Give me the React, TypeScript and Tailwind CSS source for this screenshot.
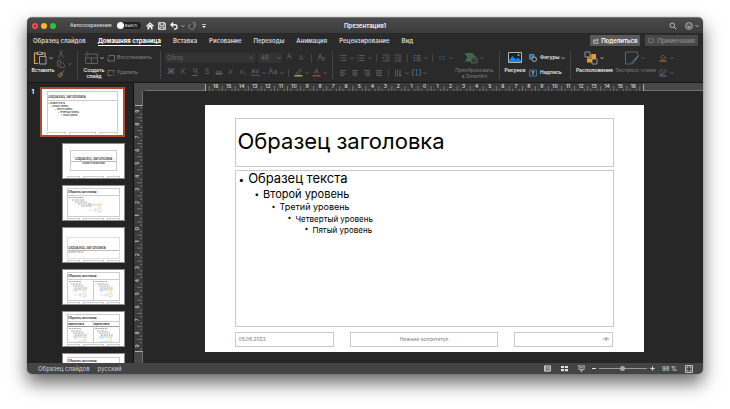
import type { ReactNode } from 'react';
import clsx from 'clsx';

interface IconProps {
  className?: string;
  box?: string;
  children: ReactNode;
}

function Icon({ className = 'size-2', box = '0 0 16 16', children }: IconProps) {
  return (
    <svg viewBox={box} className={clsx('shrink-0', className)} fill="none" stroke="currentColor" strokeWidth="1.6" aria-hidden="true">
      {children}
    </svg>
  );
}

function Chevron({ className = 'text-[#707070]' }: { className?: string }) {
  return (
    <span className={clsx('flex w-1.5 shrink-0 justify-center', className)}>
      <Icon className="size-1" box="0 0 8 8">
        <path d="M1 2.5l3 3 3-3" />
      </Icon>
    </span>
  );
}

/* ---------- Title bar ---------- */

function TitleBar() {
  return (
    <header className="grid h-4 shrink-0 grid-cols-[1fr_auto_1fr] items-center border-t border-[#777] bg-linear-to-b from-[#4b4b4b] to-[#3b3b3b] text-[#e6e6e6]">
      <div className="flex items-center pl-[5px]">
        <div className="flex gap-[3px]">
          <button aria-label="Закрыть" className="flex size-[6px] items-center justify-center rounded-full bg-[#fb4f49]">
            <span className="size-[2px] rounded-full bg-[#7c1512]" />
          </button>
          <button aria-label="Свернуть" className="size-[6px] rounded-full bg-[#fcb827]" />
          <button aria-label="Развернуть" className="size-[6px] rounded-full bg-[#2bc33b]" />
        </div>
        <label className="ml-[14px] flex items-center gap-[5px] text-[5px] font-semibold text-[#d0d0d0]">
          Автосохранение
          <input type="checkbox" className="sr-only" />
          <span className="flex h-[7px] w-6 items-center gap-px rounded-full bg-[#202020] text-[4px] text-[#bdbdbd]">
            <span className="size-[7px] rounded-full bg-white" />
            ВЫКЛ.
          </span>
        </label>
        <div className="flex items-center pl-[3px] text-[#f2f2f2]">
          <button aria-label="Главная" className="flex w-3 justify-center">
            <Icon>
              <path d="M1 8.5L8 2l7 6.5" strokeWidth="2.400" />
              <path d="M3 9l5-4.5L13 9v6H9.800v-4H6.200v4H3z" fill="currentColor" stroke="none" />
            </Icon>
          </button>
          <button aria-label="Сохранить" className="flex w-3 justify-center">
            <Icon>
              <path d="M1.500 1.500h11l2 2v11h-13z" strokeWidth="2.200" />
              <path d="M4 2v4.500h8V2M4 14v-4h8v4" strokeWidth="1.800" />
            </Icon>
          </button>
          <button aria-label="Отменить" className="flex w-3 justify-center">
            <Icon>
              <path d="M6.500 1L2 5.500 6.500 10M2 5.500h8a4 4 0 014 4v.5a4 4 0 01-4 4H8" strokeWidth="2.600" />
            </Icon>
          </button>
          <Chevron className="text-[#d0d0d0]" />
          <button aria-label="Повторить" className="flex w-3 justify-center text-[#8b8b8b]">
            <Icon>
              <path d="M4 4a6 6 0 108.500 1M9 1.500h5V7" strokeWidth="2" />
            </Icon>
          </button>
          <button aria-label="Настроить панель" className="flex w-3 justify-center">
            <Icon className="size-[6px]">
              <path d="M3 4h10" strokeWidth="2" />
              <path d="M3 8h10l-5 5z" fill="currentColor" stroke="none" />
            </Icon>
          </button>
        </div>
      </div>
      <h1 className="text-[6px] font-bold">Презентация1</h1>
      <div className="flex items-center justify-end gap-2 pr-[3px] text-[#d0d0d0]">
        <button aria-label="Поиск">
          <Icon>
            <circle cx="6.500" cy="6.500" r="4.500" />
            <path d="M10 10l4.500 4.500" strokeWidth="2" />
          </Icon>
        </button>
        <button aria-label="Отзыв" className="flex items-center gap-px">
          <Icon>
            <circle cx="8" cy="8" r="6.800" />
            <path d="M5 9.500c1 2.500 5 2.500 6 0zM5.500 5v2M10.500 5v2" />
          </Icon>
          <Chevron className="text-[#d0d0d0]" />
        </button>
      </div>
    </header>
  );
}

/* ---------- Tabs ---------- */

const tabs = ['Образец слайдов', 'Домашняя страница', 'Вставка', 'Рисование', 'Переходы', 'Анимация', 'Рецензирование', 'Вид'];

function TabBar() {
  return (
    <nav className="flex h-[15px] shrink-0 items-center bg-[#2a2a2a] pr-[5px] pl-1.5">
      <div className="flex gap-3 text-[6px] leading-[9px] font-semibold text-[#d6d6d6]">
        {tabs.map((tab) => (
          <a
            key={tab}
            href="#"
            className={clsx('whitespace-nowrap border-b', tab === 'Домашняя страница' ? 'border-white font-bold text-white' : 'border-transparent')}
          >
            {tab}
          </a>
        ))}
      </div>
      <div className="ml-auto flex gap-[5px] text-[6px] leading-[11px]">
        <button className="flex h-[11px] items-center gap-[2px] rounded-[1px] bg-[#5a5a5a] px-[3px] font-semibold text-white">
          <Icon className="size-[6px]">
            <path d="M6 5H2v9h11v-4M5 10c0-4 3-5 8-5M10 1.500L14 5l-4 3.500" />
          </Icon>
          Поделиться
        </button>
        <button className="flex h-[11px] items-center gap-[3px] rounded-[1px] bg-[#484848] px-[3px] font-medium text-[#8e8e8e]">
          <Icon className="size-[6px]">
            <path d="M1.500 2h13v9H8l-3 3v-3H1.500z" />
          </Icon>
          Примечания
        </button>
      </div>
    </nav>
  );
}

/* ---------- Ribbon ---------- */

function Separator() {
  return <div className="mx-1 my-[3px] w-px shrink-0 bg-[#444]" />;
}

function Divider() {
  return <span className="mx-[3px] h-2 w-px shrink-0 bg-[#454545]" />;
}

interface BigButtonProps {
  label: string;
  width: string;
  icon: ReactNode;
  menu?: boolean;
  dim?: boolean;
}

function BigButton({ label, width, icon, menu = true, dim = false }: BigButtonProps) {
  return (
    <button className={clsx('flex shrink-0 flex-col items-center gap-[2px] pt-[2px]', width)}>
      <span className="flex h-[15px] items-center gap-px">
        {icon}
        {menu && <Chevron className={dim ? 'text-[#707070]' : 'text-[#e0e0e0]'} />}
      </span>
      <span className={clsx('text-center text-[5px] leading-[6px] whitespace-pre', dim ? 'font-medium text-[#757575]' : 'font-semibold text-[#ececec]')}>
        {label}
      </span>
    </button>
  );
}

function Tool({ label, children }: { label: string; children: ReactNode }) {
  return (
    <button aria-label={label} className="flex w-3 shrink-0 items-center justify-center text-[#646464]">
      {children}
    </button>
  );
}

function Row({ children }: { children: ReactNode }) {
  return <div className="flex h-[15px] items-center">{children}</div>;
}

function ClipboardGroup() {
  return (
    <>
      <BigButton
        label="Вставить"
        width="w-6"
        icon={
          <Icon className="size-[14px]" box="0 0 28 28">
            <path d="M10 4H3v21h7M17 4h7v6" stroke="#e2a33c" strokeWidth="2.400" />
            <path d="M8 7V3.500h3L13.500 1 16 3.500h3V7z" stroke="#c8c8c8" />
            <path d="M13 11h13v15H13z" stroke="#bdbdbd" fill="#2a2a2a" />
          </Icon>
        }
      />
      <div className="flex w-[18px] shrink-0 flex-col pt-px">
        <div className="flex h-[10px] items-center">
          <Tool label="Вырезать">
            <Icon>
              <path d="M5 1l5 10M11 1L6 11" />
              <circle cx="4" cy="13" r="2" stroke="#34566f" />
              <circle cx="12" cy="13" r="2" stroke="#34566f" />
            </Icon>
          </Tool>
        </div>
        <div className="flex h-[10px] items-center">
          <Tool label="Копировать">
            <Icon>
              <path d="M5 12H1V1h6l2 2M6 5h5l3.500 3.500V15H6z" />
            </Icon>
          </Tool>
          <Chevron />
        </div>
        <div className="flex h-[10px] items-center">
          <Tool label="Формат по образцу">
            <Icon>
              <path d="M14 1l-4 5M7 5l5 4" stroke="#7a7a7a" strokeWidth="2" />
              <path d="M6 6l5 4-4 5-6-4z" stroke="#8f7041" fill="#5b4a2e" />
            </Icon>
          </Tool>
        </div>
      </div>
    </>
  );
}

function SlidesGroup() {
  return (
    <>
      <BigButton
        label={'Создать\nслайд'}
        width="w-6"
        icon={
          <Icon className="size-[14px] text-[#6a6a6a]" box="0 0 28 28">
            <path d="M9 6h18v19H3V12M3 14h24M15 14v11" />
            <path d="M6 1v11M0 6.500h12" stroke="#3c6a4c" strokeWidth="2" />
          </Icon>
        }
      />
      <div className="flex w-[50px] shrink-0 flex-col pt-[2px] pl-px text-[5px] font-medium text-[#7c7c7c]">
        <Row>
          <button className="flex items-center gap-[2px]">
            <Icon>
              <path d="M5 3h10v11H2V8" />
              <path d="M6 6L2 4l2-3" stroke="#33648b" />
            </Icon>
            Восстановить
          </button>
        </Row>
        <Row>
          <button className="flex items-center gap-[2px]">
            <Icon>
              <path d="M9 13H2V3h12v5" />
              <path d="M11 10l4 4M15 10l-4 4" stroke="#833c3c" />
            </Icon>
            Удалить
          </button>
        </Row>
      </div>
    </>
  );
}

function FontGroup() {
  return (
    <div className="flex w-[163px] shrink-0 flex-col pt-[2px] text-[7px] text-[#6c6c6c]">
      <Row>
        <div className="flex h-[10px] w-[90px] items-center rounded-[1px] bg-[#333] pr-px">
          <select aria-label="Шрифт" className="h-[10px] min-w-0 flex-1 appearance-none pl-[2px] text-[6px] leading-[10px]">
            <option>Gilroy</option>
          </select>
          <Chevron />
        </div>
        <div className="ml-[3px] flex h-[10px] w-6 items-center rounded-[1px] bg-[#333]">
          <select aria-label="Размер шрифта" className="h-[10px] min-w-0 flex-1 appearance-none pl-[3px] text-[6px] leading-[10px]">
            <option>48</option>
          </select>
          <Chevron />
        </div>
        <span className="w-[2px]" />
        <Tool label="Увеличить шрифт">A<sup className="text-[4px] text-[#3f627d]">ˆ</sup></Tool>
        <Tool label="Уменьшить шрифт"><span className="text-[6px]">A</span><sup className="text-[4px] text-[#3f627d]">ˇ</sup></Tool>
        <Divider />
        <Tool label="Очистить формат">
          <Icon className="size-[9px]" box="0 0 18 18">
            <path d="M2 13L6.500 2 11 13M4 9h5" />
            <path d="M10 13l4-5 3 2.500-4 5h-2z" stroke="#75507c" />
          </Icon>
        </Tool>
      </Row>
      <Row>
        <Tool label="Полужирный"><b>Ж</b></Tool>
        <Tool label="Курсив"><i>К</i></Tool>
        <Tool label="Подчеркнутый"><u>Ч</u></Tool>
        <Tool label="Тень"><span>S</span></Tool>
        <Tool label="Зачеркнутый"><s className="text-[6px]">ab</s></Tool>
        <Tool label="Надстрочный">x<sup className="text-[4px] text-[#3f627d]">²</sup></Tool>
        <Tool label="Подстрочный">x<sub className="text-[4px] text-[#3f627d]">2</sub></Tool>
        <Tool label="Интервал">
          <Icon className="size-[9px]" box="0 0 18 18">
            <path d="M1 10L4.500 2 8 10M2.500 7.500h4M9 2l3.500 8L16 2" />
            <path d="M2 14.500h14M4 12.500l-2.500 2L4 17M14 12.500l2.500 2L14 17" stroke="#3b6a90" />
          </Icon>
        </Tool>
        <Chevron />
        <Tool label="Регистр">Aa</Tool>
        <Chevron />
        <Divider />
        <Tool label="Цвет выделения">
          <Icon className="size-[9px]" box="0 0 18 18">
            <path d="M6 9l6-7 3 3-6 7H6zM3 12l3-2" />
            <path d="M1 15.500h16" stroke="#a9a54b" strokeWidth="3" />
          </Icon>
        </Tool>
        <Chevron />
        <Tool label="Цвет шрифта">
          <Icon className="size-[9px]" box="0 0 18 18">
            <path d="M5 11l4-9 4 9M6.500 8h5" />
            <path d="M1 15.500h16" stroke="#a64040" strokeWidth="3" />
          </Icon>
        </Tool>
        <Chevron />
      </Row>
    </div>
  );
}

const aligns = [
  { label: 'По левому краю', d: 'M2 3h12M2 6.300h8M2 9.700h12M2 13h8' },
  { label: 'По центру', d: 'M2 3h12M4 6.300h8M2 9.700h12M4 13h8' },
  { label: 'По правому краю', d: 'M2 3h12M6 6.300h8M2 9.700h12M6 13h8' },
  { label: 'По ширине', d: 'M2 3h12M2 6.300h12M2 9.700h12M2 13h12' },
];

function ParagraphGroup() {
  return (
    <div className="flex w-[117px] shrink-0 flex-col pt-[2px]">
      <Row>
        <Tool label="Маркеры">
          <Icon>
            <path d="M5 3h10M5 8h10M5 13h10" />
            <path d="M1 3h2M1 8h2M1 13h2" stroke="#2f5f8e" strokeWidth="2.400" />
          </Icon>
        </Tool>
        <Chevron />
        <Tool label="Нумерация">
          <Icon>
            <path d="M5 3h10M5 8h10M5 13h10" />
            <path d="M2 1v4M2 6v4M2 11v4" stroke="#2f5f8e" />
          </Icon>
        </Tool>
        <Chevron />
        <Divider />
        <Tool label="Уменьшить отступ">
          <Icon>
            <path d="M1 2h14M8 6h7M8 10h7M1 14h14" />
            <path d="M6 8H1M3 6L1 8l2 2" stroke="#2f5f8e" />
          </Icon>
        </Tool>
        <Tool label="Увеличить отступ">
          <Icon>
            <path d="M1 2h14M8 6h7M8 10h7M1 14h14" />
            <path d="M1 8h5M4 6l2 2-2 2" stroke="#2f5f8e" />
          </Icon>
        </Tool>
        <Divider />
        <Tool label="Междустрочный интервал">
          <Icon>
            <path d="M7 3h8M7 6.300h8M7 9.700h8M7 13h8" />
            <path d="M3 2v12M1 4l2-2 2 2M1 12l2 2 2-2" stroke="#2f5f8e" />
          </Icon>
        </Tool>
        <Chevron />
        <Divider />
        <Tool label="Колонки">
          <Icon className="size-[6px]">
            <path d="M0 4h7M0 8h7M0 12h7M9 4h7M9 8h7M9 12h7" stroke="#2f5577" />
          </Icon>
        </Tool>
        <Chevron />
      </Row>
      <Row>
        {aligns.map((align) => (
          <Tool key={align.label} label={align.label}>
            <Icon>
              <path d={align.d} />
            </Icon>
          </Tool>
        ))}
        <Divider />
        <Tool label="Направление текста">
          <Icon>
            <path d="M3 1v14M7 1v14" />
            <path d="M12 2v12M10 12l2 2 2-2" stroke="#7c7c7c" />
          </Icon>
        </Tool>
        <Chevron />
        <Tool label="Выравнивание текста">
          <Icon className="size-[9px]">
            <path d="M4 3H1v10h3M12 3h3v10h-3" />
            <path d="M8 2v12M6 5l2-2 2 2M6 11l2 2 2-2" stroke="#2f5f8e" />
          </Icon>
        </Tool>
        <Chevron />
      </Row>
    </div>
  );
}

function InsertGroup() {
  return (
    <>
      <BigButton
        label="Рисунок"
        width="w-[22px]"
        menu={false}
        icon={
          <Icon className="h-[11px] w-[14px]" box="0 0 28 22">
            <path d="M1 1h26v20H1z" stroke="#d8d8d8" fill="#1e2225" />
            <path d="M2 16l7-8 7 7 4-4 6 6v3H2z" fill="#1b83dc" stroke="none" />
            <circle cx="21" cy="6" r="2" fill="#e8a33d" stroke="none" />
          </Icon>
        }
      />
      <div className="ml-[3px] flex w-[37px] shrink-0 flex-col pt-[2px] text-[5px] font-semibold text-[#e4e4e4]">
        <Row>
          <button className="flex items-center gap-[3px]">
            <Icon>
              <path d="M1 1h9v9H1z" fill="#1c70b8" stroke="#4ea0de" />
              <circle cx="10.500" cy="10.500" r="4.500" fill="#2a2a2a" stroke="#d0d0d0" />
            </Icon>
            Фигуры
          </button>
          <Chevron className="text-[#d8d8d8]" />
        </Row>
        <Row>
          <button className="flex items-center gap-[3px]">
            <Icon>
              <path d="M1 2h14v12H1z" stroke="#3d8fd0" />
              <path d="M5 5.500h6M8 5.500V12" stroke="#d8d8d8" />
            </Icon>
            Надпись
          </button>
        </Row>
      </div>
    </>
  );
}

function DrawGroup() {
  return (
    <>
      <BigButton
        label="Расположение"
        width="w-[39px]"
        icon={
          <Icon className="size-[14px]" box="0 0 28 28">
            <path d="M6 6h18v17H6z" fill="#e79a27" stroke="none" />
            <path d="M2 2h10v10H2zM16 16h10v10H16z" fill="#2a2a2a" stroke="#a8a8a8" />
            <path d="M14 4v11M4 14.500h11" stroke="#2a2a2a" strokeWidth="1" />
          </Icon>
        }
      />
      <BigButton
        label="Экспресс-стили"
        width="w-[43px]"
        dim
        icon={
          <Icon className="size-[14px] text-[#707070]" box="0 0 28 28">
            <path d="M12 26H1V2h24v6" />
            <path d="M27 9L17 19l2 2z" stroke="#8a8a8a" />
            <path d="M17 19c-4 0-3 5-6 6 4 2 8 0 8-4z" fill="#31587a" stroke="#31587a" />
          </Icon>
        }
      />
      <div className="flex w-[18px] shrink-0 flex-col pt-[2px]">
        <Row>
          <Tool label="Заливка фигуры">
            <Icon>
              <path d="M3 7l5-5 5 5-5 4zM13 7v3" />
              <path d="M1 14h14" stroke="#9a5c38" strokeWidth="2.600" />
            </Icon>
          </Tool>
          <Chevron />
        </Row>
        <Row>
          <Tool label="Контур фигуры">
            <Icon>
              <path d="M8 2H2v9h4M6 11l1-3 6-7 2 2-6 7z" />
              <path d="M1 14h14" stroke="#45598e" strokeWidth="2.600" />
            </Icon>
          </Tool>
          <Chevron />
        </Row>
      </div>
    </>
  );
}

function Ribbon() {
  return (
    <div className="flex h-[35px] shrink-0 overflow-hidden border-b border-[#181818] bg-[#2a2a2a] pl-1">
      <ClipboardGroup />
      <Separator />
      <SlidesGroup />
      <Separator />
      <FontGroup />
      <Separator />
      <ParagraphGroup />
      <BigButton
        label={'Преобразовать\nв SmartArt'}
        width="w-[41px]"
        dim
        icon={
          <Icon className="size-[14px]" box="0 0 28 28">
            <path d="M1 4h16l8 9h-9v8H1l6-8z" fill="#3c6b49" stroke="none" />
            <path d="M14 14h12v10H14z" fill="#3a3a3a" stroke="#5f5f5f" />
          </Icon>
        }
      />
      <Separator />
      <InsertGroup />
      <Separator />
      <DrawGroup />
    </div>
  );
}

/* ---------- Slide thumbnails ---------- */

function LevelLines({ wide = false }: { wide?: boolean }) {
  return (
    <svg viewBox={wide ? '0 0 48 24' : '0 0 24 24'} className={wide ? 'h-6 w-12' : 'h-6 w-6'} aria-hidden="true">
      <g stroke="#8a8a8a" strokeWidth="0.7" strokeDasharray="2 0.500">
        <path d={wide ? 'M1 1.500h15M4 4h13M7 6h12M10 8h13M13 10h10' : 'M1 1.500h12M3 4h11M5 6h11M7 8h12'} />
      </g>
      <g strokeWidth="0.700" fill="none" transform={wide ? 'translate(20 6)' : 'translate(5 7)'}>
        <path d="M1 2h3v2H1z" stroke="#a3bfdf" />
        <path d="M6 4V1M8 4V2" stroke="#8fc0a4" />
        <path d="M10 2h3v2h-3z" stroke="#e6c983" />
        <path d="M1 8h3M6 7h2v2H6zM10 6h3v4h-3z" stroke="#bdd3d8" />
      </g>
    </svg>
  );
}

function ThumbFooter() {
  return (
    <div className="mt-auto grid h-[2px] grid-cols-[2fr_3fr_2fr] gap-[3px]">
      <span className="border-x border-t border-[#ccc]" />
      <span className="border-x border-t border-[#ccc]" />
      <span className="border-x border-t border-[#ccc]" />
    </div>
  );
}

const thumbTitle = 'Образец заголовка';

function MasterThumb() {
  return (
    <div className="flex h-full flex-col bg-white px-[5px] pt-[2px] pb-px text-black">
      <p className="h-[10px] border border-[#ccc] text-[4px] leading-[9px]">{thumbTitle}</p>
      <ul className="mb-px flex-1 border-x border-[#ccc] pt-px text-[2px] leading-[3px]">
        <li>• Образец текста</li>
        <li className="pl-[3px]">• Второй уровень</li>
        <li className="pl-[7px]">• Третий уровень</li>
        <li className="pl-[10px]">• Четвертый уровень</li>
        <li className="pl-[13px]">• Пятый уровень</li>
      </ul>
      <ThumbFooter />
    </div>
  );
}

function TitleThumb() {
  return (
    <>
      <div className="mx-[3px] mt-1 flex h-[21px] flex-col justify-end border border-[#ccc] text-center">
        <p className="border-b border-[#bbb] text-[4px] leading-[5px] whitespace-nowrap">{thumbTitle}</p>
        <p className="h-2 text-[2px] leading-[3px]">Образец подзаголовка</p>
      </div>
      <ThumbFooter />
    </>
  );
}

function ContentThumb() {
  return (
    <>
      <p className="h-2 border border-[#ccc] text-[3px] leading-[7px] font-medium">{thumbTitle}</p>
      <div className="h-[21px] overflow-hidden border border-t-0 border-[#ccc]">
        <LevelLines wide />
      </div>
      <ThumbFooter />
    </>
  );
}

function SectionThumb() {
  return (
    <>
      <div className="mt-[7px] flex h-[22px] flex-col justify-end border border-[#ddd]">
        <p className="border-b border-[#bbb] text-[4px] leading-[5px]">{thumbTitle}</p>
        <p className="h-[7px] text-[2px] leading-[3px] text-[#888]">Образец текста</p>
      </div>
      <ThumbFooter />
    </>
  );
}

function ColumnsThumb({ headed = false }: { headed?: boolean }) {
  return (
    <>
      <p className="h-2 border border-[#ccc] text-[3px] leading-[7px] font-medium">{thumbTitle}</p>
      <div className="grid h-[21px] grid-cols-2 border-x border-b border-[#ccc]">
        {[0, 1].map((column) => (
          <div key={column} className={clsx('overflow-hidden', column === 0 && 'border-r border-[#ccc]')}>
            {headed && <p className="border-b border-[#999] text-[2px] leading-[4px] font-bold">Образец текста</p>}
            <LevelLines />
          </div>
        ))}
      </div>
      <ThumbFooter />
    </>
  );
}

function HeadingThumb() {
  return <p className="mt-px h-2 border border-[#ccc] text-[3px] leading-[7px] font-medium">{thumbTitle}</p>;
}

const layouts = [
  { name: 'Титульный слайд', view: <TitleThumb /> },
  { name: 'Заголовок и объект', view: <ContentThumb /> },
  { name: 'Заголовок раздела', view: <SectionThumb /> },
  { name: 'Два объекта', view: <ColumnsThumb /> },
  { name: 'Сравнение', view: <ColumnsThumb headed /> },
  { name: 'Только заголовок', view: <HeadingThumb /> },
];

function ThumbnailPane() {
  return (
    <aside className="flex w-[107px] shrink-0 flex-col items-end gap-[6px] overflow-hidden border-r border-[#111] bg-[#242424] pt-1 pr-2">
      <div className="flex shrink-0 gap-[6px]">
        <span className="text-[6px] leading-[9px] font-bold text-white">1</span>
        <button aria-label="Образец слайдов 1" className="h-[50px] w-[85px] border-2 border-[#b24a33] text-left">
          <MasterThumb />
        </button>
      </div>
      {layouts.map((layout) => (
        <button key={layout.name} aria-label={layout.name} className="h-9 w-[63px] shrink-0 border border-[#8c8c8c] bg-white text-left text-black">
          <span className="flex h-full flex-col px-1 pt-[2px]">{layout.view}</span>
        </button>
      ))}
    </aside>
  );
}

/* ---------- Rulers ---------- */

const step = 13.05;

function Ticks({ count, middle }: { count: number; middle: number }) {
  const ticks = [];
  for (let i = -count * 4 - 2; i <= count * 4 + 2; i++) {
    if (i % 4 === 0) continue;
    const x = middle + (i * step) / 4;
    ticks.push(<path key={i} d={`M${x} 8V${i % 2 === 0 ? 3 : 6}`} />);
  }
  return <g stroke="#8d8d8d" strokeWidth="0.7">{ticks}</g>;
}

function Numbers({ count, middle }: { count: number; middle: number }) {
  const values = Array.from({ length: count * 2 + 1 }, (_, i) => i - count);
  return (
    <g fill="#dcdcdc" className="text-[5px] font-medium" textAnchor="middle">
      {values.map((value) => (
        <text key={value} x={middle + value * step} y="5">
          {Math.abs(value)}
        </text>
      ))}
    </g>
  );
}

function HorizontalRuler() {
  return (
    <div className="flex h-2 shrink-0 bg-[#484848] pl-[11px]">
      <div className="flex-1 border-b border-[#707070]" />
      <svg className="h-2 w-[439px] shrink-0 bg-[#3a3a3a]" viewBox="0 0 439 8" aria-hidden="true">
        <Ticks count={16} middle={219.5} />
        <Numbers count={16} middle={219.5} />
        <path d="M0.500 1v7M438.500 1v7" stroke="#aaa" />
      </svg>
      <div className="flex-1 border-b border-[#707070]" />
    </div>
  );
}

function VerticalRuler() {
  return (
    <div className="flex w-[9px] shrink-0 flex-col overflow-hidden bg-[#484848]">
      <div className="h-[14px] shrink-0 border-r border-[#707070]" />
      <svg className="h-[247px] w-[9px] shrink-0 bg-[#3a3a3a]" viewBox="0 0 9 247" aria-hidden="true">
        <g transform="translate(0 247) rotate(-90)">
          <Ticks count={9} middle={123.5} />
          <Numbers count={9} middle={123.5} />
        </g>
        <path d="M1 0.500h8M1 246.500h8" stroke="#aaa" />
      </svg>
      <div className="flex-1 border-r border-[#707070]" />
    </div>
  );
}

/* ---------- Slide ---------- */

const levels = [
  { text: 'Образец текста', row: 'h-4 gap-1 pl-[3px] text-[13px]', bullet: 'text-[10px]' },
  { text: 'Второй уровень', row: 'h-[14px] gap-1 pl-[19px] text-[11px]', bullet: 'text-[8px]' },
  { text: 'Третий уровень', row: 'h-3 gap-1 pl-9 text-[9px]', bullet: 'text-[7px]' },
  { text: 'Четвертый уровень', row: 'h-[11px] gap-1 pl-[52px] text-[8px]', bullet: 'text-[7px]' },
  { text: 'Пятый уровень', row: 'h-[11px] gap-1 pl-[69px] text-[8px]', bullet: 'text-[7px]' },
];

function Slide() {
  return (
    <article className="flex h-[247px] w-[439px] shrink-0 flex-col bg-white px-[30px] pt-[13px] pb-[5px] text-black">
      <h2 className="flex h-[49px] items-center border border-[#c9c9c9] px-[2px] pb-[3px] text-[22px] leading-6">Образец заголовка</h2>
      <ul className="mt-[3px] flex-1 border border-[#c9c9c9]">
        {levels.map((level) => (
          <li key={level.text} className={clsx('flex items-center', level.row)}>
            <span className={level.bullet}>•</span>
            {level.text}
          </li>
        ))}
      </ul>
      <footer className="mt-[5px] grid h-[15px] grid-cols-[100fr_149fr_100fr] gap-x-4 text-[5px] leading-[13px] text-[#777]">
        <p className="border border-[#c9c9c9] px-[3px]">05.06.2022</p>
        <p className="border border-[#c9c9c9] text-center">Нижний колонтитул</p>
        <p className="border border-[#c9c9c9] px-[3px] text-right">‹#›</p>
      </footer>
    </article>
  );
}

/* ---------- Status bar ---------- */

function StatusBar() {
  return (
    <footer className="flex h-[11px] shrink-0 items-center bg-[#444] pr-[10px] pl-[11px] text-[6px] text-[#d0d0d0]">
      <span>Образец слайдов</span>
      <button className="ml-2">русский</button>
      <div className="ml-auto flex items-center text-[#e0e0e0]">
        <div className="flex gap-[10px]">
          <button aria-label="Обычный режим">
            <Icon className="size-[7px]">
              <path d="M1 2h14v12H1zM4 2v12" strokeWidth="2" />
              <path d="M7 5h6v4H7zM7 12h6" />
            </Icon>
          </button>
          <button aria-label="Сортировщик слайдов">
            <Icon className="size-[7px]">
              <path d="M0 2h7v5H0zM9 2h7v5H9zM0 9h7v5H0zM9 9h7v5H9z" fill="currentColor" stroke="none" />
            </Icon>
          </button>
          <button aria-label="Показ слайдов">
            <Icon className="size-[7px]">
              <path d="M0 2h16M2 2v8h12V2M5 6h6M8 10v4M5 14h6" />
            </Icon>
          </button>
        </div>
        <button aria-label="Уменьшить" className="ml-[7px] h-px w-1 bg-current" />
        <input
          type="range"
          aria-label="Масштаб"
          min={0}
          max={100}
          defaultValue={49}
          className="mx-[3px] h-[5px] w-12 appearance-none bg-linear-to-b from-transparent from-40% via-[#999] via-50% to-transparent to-60% [&::-webkit-slider-thumb]:size-[5px] [&::-webkit-slider-thumb]:appearance-none [&::-webkit-slider-thumb]:rounded-full [&::-webkit-slider-thumb]:bg-[#a8a8a8]"
        />
        <button aria-label="Увеличить">
          <Icon className="size-[5px]">
            <path d="M8 1v14M1 8h14" strokeWidth="3" />
          </Icon>
        </button>
        <button className="ml-[7px]">98 %</button>
        <button aria-label="Вписать слайд" className="ml-2">
          <Icon className="size-2">
            <path d="M1 1h14v14H1zM4 7V4h3M9 4h3v3M12 9v3H9M7 12H4V9" />
          </Icon>
        </button>
      </div>
    </footer>
  );
}

export default function App() {
  return (
    <div className="flex h-screen flex-col bg-white px-[27px] pt-[17px] pb-[35px] font-['Inter','Noto_Sans',sans-serif]">
      <div className="flex min-h-0 flex-1 flex-col overflow-hidden rounded-[5px] shadow-[0_0_1px_rgba(0,0,0,0.6),0_9px_18px_rgba(0,0,0,0.6)]">
        <TitleBar />
        <TabBar />
        <Ribbon />
        <main className="flex min-h-0 flex-1 bg-[#272727]">
          <ThumbnailPane />
          <section className="flex min-w-0 flex-1 flex-col">
            <HorizontalRuler />
            <div className="flex min-h-0 flex-1">
              <VerticalRuler />
              <div className="flex flex-1 justify-center pt-[14px] pl-[2px]">
                <Slide />
              </div>
            </div>
          </section>
        </main>
        <StatusBar />
      </div>
    </div>
  );
}
